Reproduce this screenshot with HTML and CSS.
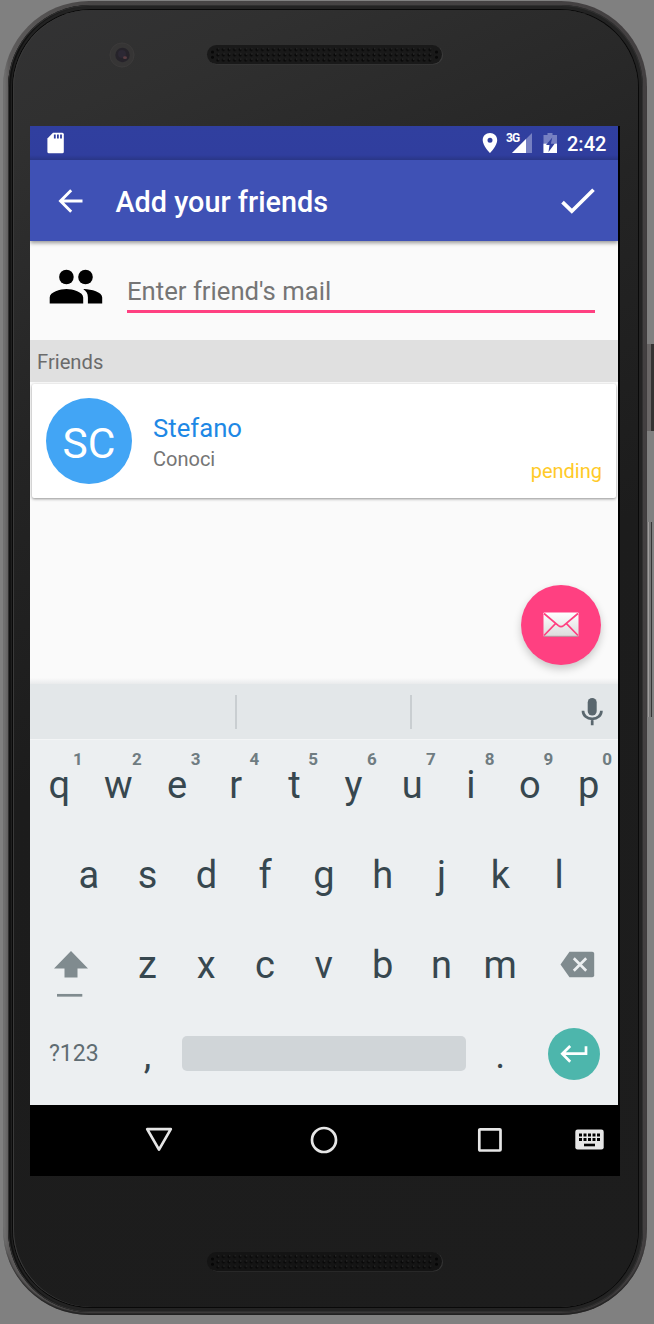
FILE: index.html
```html
<!DOCTYPE html>
<html lang="en">
<head>
<meta charset="utf-8">
<title>Add your friends</title>
<link rel="stylesheet" href="styles.css">
</head>
<body>
<div class="phone">
  <div class="bezel">
    <div class="glass">
      <div class="top">
        <svg class="camera" width="26" height="26" viewBox="0 0 26 26"><circle cx="13" cy="13" r="12.5" fill="#363535"/><circle cx="13" cy="13" r="12" fill="none" stroke="#3e3c3c" stroke-width=".7"/><circle cx="13.5" cy="13" r="7.2" fill="#26232a"/><circle cx="13" cy="12" r="4" fill="#2c2834"/><ellipse cx="16" cy="15.7" rx="2" ry="1.4" fill="#5c3e43"/></svg>
        <svg class="speaker" width="238" height="22" viewBox="0 0 238 22"><defs><pattern id="holes" width="5.58" height="5.3" patternUnits="userSpaceOnUse" x="9" y="3"><circle cx="2.8" cy="2.6" r="1.5" fill="#080808"/><circle cx="3.5" cy="1.8" r=".65" fill="#383838"/></pattern></defs><rect x="2" y="1.500" width="235" height="19" rx="9.5" fill="#3c3c3c"/><rect x="1" y="1" width="235" height="19" rx="9.5" fill="#191919"/><rect x="9" y="3" width="218.6" height="15.9" fill="url(#holes)"/><g fill="#080808"><circle cx="6.5" cy="8" r="1.5"/><circle cx="6.5" cy="13.3" r="1.5"/><circle cx="230.5" cy="8" r="1.5"/><circle cx="230.5" cy="13.3" r="1.5"/></g></svg>
      </div>
      <div class="screen">
        <div class="status">
          <svg class="sd" width="17" height="22" viewBox="0 0 17 22"><path d="M6 .7h9.3q1.5 0 1.5 1.5v17.6q0 1.5-1.5 1.5H1.9q-1.5 0-1.5-1.5V6.5z" fill="#fff"/><path d="M7.8 2.6v4M10.9 2.6v4M14 2.6v4" stroke="#303f9f" stroke-width="1.8"/></svg>
          <svg class="pin" width="16" height="22" viewBox="0 0 16 22"><path fill="#fff" fill-rule="evenodd" d="M8 1C3.8 1 .7 4.1.7 8.2.7 13.5 8 21 8 21s7.2-7.500 7.200-12.800C15.200 4.100 12 1 8 1zm0 4.700a2.500 2.500 0 1 1 0 5 2.500 2.500 0 0 1 0-5z"/></svg>
          <div class="signal"><svg width="26" height="22" viewBox="0 0 26 22"><path d="M5 21 25 1v20z" fill="#7680c2"/><path d="M5 21 19 7v14z" fill="#fff"/></svg><span class="net">3G</span></div>
          <svg class="battery" width="15" height="22" viewBox="0 0 15 22"><path d="M4.500 1h5v2H14v18H.500V3h4z" fill="#7680c2"/><path d="M.5 11.700H14V21H.5z" fill="#fff"/><path d="M9.300 5.500 3 13h3.500l-1 7 6.300-8.500H7.900z" fill="#303f9f"/></svg>
          <span class="clock">2:42</span>
        </div>
        <div class="appbar">
          <svg class="back" width="26" height="24" viewBox="0 0 26 24"><path d="M24.500 12H3M13.200 1.300 2.500 12l10.700 10.700" fill="none" stroke="#fff" stroke-width="2.900"/></svg>
          <span class="title">Add your friends</span>
          <svg class="check" width="36" height="28" viewBox="0 0 36 28"><path d="M2.500 15.200 11.800 24.200 33.500 2.800" fill="none" stroke="#fff" stroke-width="3.700"/></svg>
        </div>
        <div class="content">
          <div class="entry">
            <svg class="people" width="54" height="36" viewBox="0 0 54 36"><circle cx="17.400" cy="8" r="7.300"/><circle cx="36.500" cy="8" r="7.300"/><path d="M.7 34.500V28.500C.7 23 11.200 20 17.500 20s16.700 3 16.700 8.500v6zM35.200 20.100c7 .2 18 3 18 8.400v6H38.900v-6c0-4-1.600-6.500-4.600-8.300z"/></svg>
            <div class="field">Enter friend's mail</div>
          </div>
          <div class="section">Friends</div>
          <div class="card">
            <div class="avatar">SC</div>
            <div class="person"><div class="first">Stefano</div><div class="last">Conoci</div></div>
            <div class="pending">pending</div>
          </div>
          <div class="fab"><svg width="36" height="25" viewBox="0 0 36 25"><defs><linearGradient id="paper" x2="0" y2="1"><stop stop-color="#fff"/><stop offset="1" stop-color="#dcdcdc"/></linearGradient></defs><rect x=".5" y=".5" width="35" height="24" rx=".7" fill="url(#paper)"/><path d="M1 1.500 15.400 13.600q2.600 2 5.200 0L35 1.500M1 23.500 12.500 11.700M35 23.500 23.500 11.700" fill="none" stroke="#ff4081" stroke-width="1.700"/><path d="M1 24.300h34" stroke="#a78d93" stroke-width=".8"/></svg></div>
        </div>
        <div class="keyboard">
          <div class="suggest"><i></i><i></i>
            <svg width="22" height="30" viewBox="0 0 22 30"><rect x="6.700" y="1" width="9" height="17.500" rx="4.500" fill="#5a676e"/><path d="M2 13.800c0 4.800 3.800 8 9.200 8s9.200-3.200 9.200-8M11.200 22v6.300" fill="none" stroke="#5a676e" stroke-width="2.700"/></svg>
          </div>
          <div class="keys">
            <div class="row"><span>q<b>1</b></span><span>w<b>2</b></span><span>e<b>3</b></span><span>r<b>4</b></span><span>t<b>5</b></span><span>y<b>6</b></span><span>u<b>7</b></span><span>i<b>8</b></span><span>o<b>9</b></span><span>p<b>0</b></span></div>
            <div class="row home"><span>a</span><span>s</span><span>d</span><span>f</span><span>g</span><span>h</span><span>j</span><span>k</span><span>l</span></div>
            <div class="row third">
              <svg class="shift" width="36" height="48" viewBox="0 0 36 48"><path d="M18 1 35 18.500H24.500V27.500H11.500V18.500H1z" fill="#808b8f"/><path d="M4 45.300h25.300" stroke="#808b8f" stroke-width="2.700"/></svg>
              <span>z</span><span>x</span><span>c</span><span>v</span><span>b</span><span>n</span><span>m</span>
              <svg class="erase" width="35" height="27" viewBox="0 0 35 27"><path d="M9.500.8h22.700q2 0 2 2v21.400q0 2-2 2H9.500L.5 13.500z" fill="#808b8f"/><path d="m13.800 7.300 12.400 12.400m0-12.400L13.800 19.700" stroke="#eceff1" stroke-width="2.700"/></svg>
            </div>
            <div class="row fourth">
              <div class="sym">?123</div><span class="comma">,</span><div class="space"></div><span class="dot">.</span>
              <div class="enter"><svg width="28" height="18" viewBox="0 0 28 18"><path d="M26 1.200v7.500H2.500M10.200 1 2.300 8.800l7.900 7.900" fill="none" stroke="#fff" stroke-width="2.700"/></svg></div>
            </div>
          </div>
        </div>
        <div class="nav">
          <svg class="tri" width="28" height="25" viewBox="0 0 28 25"><path d="M2.200 2.200h23.600L14 22.700z" fill="none" stroke="#e6e6e6" stroke-width="2.700" stroke-linejoin="round"/></svg>
          <svg class="circ" width="28" height="28" viewBox="0 0 28 28"><circle cx="14" cy="14" r="12" fill="none" stroke="#e6e6e6" stroke-width="2.700"/></svg>
          <svg class="sq" width="26" height="26" viewBox="0 0 26 26"><rect x="2.300" y="2.300" width="21.200" height="21.200" rx=".8" fill="none" stroke="#e6e6e6" stroke-width="2.700"/></svg>
          <svg class="ime" width="29" height="21" viewBox="0 0 29 21"><rect x=".3" y=".5" width="28.400" height="20" rx="2.300" fill="#e6e6e6"/><path d="M4 6h21.500M4 10.500h21.500" stroke="#000" stroke-width="3" stroke-dasharray="3 1.500"/><path d="M9 16h11" stroke="#000" stroke-width="2.600"/></svg>
        </div>
      </div>
      <svg class="speaker low" width="238" height="22" viewBox="0 0 238 22"><rect x="2" y="1.500" width="235" height="19" rx="9.500" fill="#343434"/><rect x="1" y="1" width="235" height="19" rx="9.500" fill="#141414"/><rect x="9" y="3" width="218.600" height="15.900" fill="url(#holes)"/><g fill="#060606"><circle cx="6.500" cy="8" r="1.500"/><circle cx="6.500" cy="13.300" r="1.500"/><circle cx="230.500" cy="8" r="1.500"/><circle cx="230.500" cy="13.300" r="1.500"/></g></svg>
    </div>
  </div>
  <div class="power"></div>
  <div class="volume"></div>
</div>
</body>
</html>
```
FILE: styles.css
```css
* { box-sizing: border-box; }
svg { display: block; flex: none; }
body { margin: 0; padding: 1px 7px 0 3px; height: 1324px; background: #808080; font-family: Roboto, "Noto Sans", sans-serif; overflow: hidden; }
.phone { position: relative; width: 644px; height: 1314px; padding: 4px 4px 3px 5px; border-radius: 86px; background: linear-gradient(90deg, #777 0, #5d5b5b 6px, #484646 90px, #434041 100%); box-shadow: inset 0 -3px 2px -1px #202020; }
.bezel { width: 635px; height: 1307px; padding: 5px; border-radius: 82px; background: #232323; box-shadow: inset 0 0 0 1px #303030, inset 3px 0 1px #111; }
.glass { width: 625px; height: 1297px; border-radius: 78px; background: linear-gradient(155deg, #333334 0, #303030 8%, #242424 28%, #1c1c1c 50%, #1d1d1d 100%); box-shadow: 0 0 0 1px #090909, inset 1px 0 #3a3a3a; padding-left: 17px; }
.top { height: 116px; display: flex; align-items: flex-start; }
.camera { margin: 32px 0 0 79px; }
.speaker { margin: 34px 0 0 71px; }
.speaker.low { margin: 75px 0 0 176px; }
.screen { width: 590px; height: 1050px; background: #000; padding-right: 2px; }
.status { height: 34px; background: linear-gradient(#303f9f 0, #303e9e 29px, #293687 34px); display: flex; align-items: flex-start; color: #fff; padding-top: 7px; }
.sd { margin-left: 17px; margin-top: -1px; }
.pin { margin-left: 418px; margin-top: -1px; }
.signal { position: relative; margin-left: 9px; margin-top: -1px; width: 26px; }
.net { position: absolute; left: -1px; top: 0; font-size: 12px; line-height: 12px; font-weight: 700; letter-spacing: -1px; }
.battery { margin-left: 10px; margin-top: -1px; }
.clock { margin-left: 9px; font-size: 20px; line-height: 23px; font-weight: 500; }
.appbar { position: relative; z-index: 1; height: 81px; background: #3f51b5; box-shadow: 0 2px 4px rgba(0,0,0,.4); clip-path: inset(0 0 -8px 0); color: #fff; display: flex; align-items: center; }
.back { margin-left: 27.500px; }
.title { width: 440px; margin-left: 32px; font-size: 28.800px; line-height: 34px; font-weight: 500; white-space: nowrap; padding-top: 2px; }
.check { margin-left: 4.500px; }
.content { height: 443px; background: linear-gradient(#fafafa 437px, #e9ebec 443px); }
.entry { height: 99px; display: flex; }
.people { margin: 28px 24px 0 19px; }
.field { width: 468px; height: 72px; padding-top: 34px; border-bottom: 3px solid #ff4081; color: #757575; font-size: 25.700px; line-height: 32px; }
.section { height: 42px; background: #e0e0e0; color: #6b6b6b; font-size: 20.200px; line-height: 44px; padding-left: 7px; }
.card { margin: 2px; height: 114px; background: #fff; border-radius: 2px; box-shadow: 0 1px 3px rgba(0,0,0,.42); display: flex; }
.avatar { width: 86px; height: 86px; margin: 14px 0 0 14px; border-radius: 50%; background: #42a5f5; color: #fff; text-align: center; font-size: 42.500px; line-height: 91px; }
.person { width: 360px; margin: 28px 0 0 21px; }
.first { color: #1e88e5; font-size: 25.700px; line-height: 32px; }
.last { color: #757575; font-size: 20px; line-height: 24px; margin-top: 3px; }
.pending { flex: 1; padding: 75px 14px 0 0; text-align: right; color: #ffca28; font-size: 20px; line-height: 24px; }
.fab { width: 80px; height: 80px; margin: 86.500px 17.500px 0 auto; border-radius: 50%; background: #ff4081; box-shadow: 0 4px 9px rgba(0,0,0,.2); display: flex; align-items: center; justify-content: center; }
.keyboard { height: 421px; background: #eceff1; }
.suggest { height: 56px; background: #e3e7e9; border-bottom: 1px solid #f3f5f6; display: flex; align-items: flex-start; }
.suggest i { width: 2px; height: 34px; margin: 11px 0 0 205px; background: #c9ced1; }
.suggest i + i { margin-left: 173px; }
.suggest svg { margin: 12.500px 0 0 168.500px; }
.keys { margin-top: -1px; }
.row { height: 90px; display: flex; align-items: center; color: #37474f; font-size: 38px; line-height: 92px; }
.row span { position: relative; width: 58.800px; text-align: center; flex: none; padding-top: 1px; }
.row b { position: absolute; left: 38px; top: 11px; width: 20px; font-size: 17px; font-weight: 700; line-height: 20px; color: #6f7c81; }
.home { padding-left: 29.400px; }
.shift { margin: 19px 29px 0 23px; }
.erase { margin-left: 30px; }
.sym { width: 88px; padding-left: 19px; font-size: 23px; color: #5f6c72; line-height: 94px; }
.space { width: 284px; height: 35px; border-radius: 5px; background: #d0d5d8; margin: 0 5px 2px; }
.fourth .enter { width: 52px; height: 52px; margin-left: 18px; border-radius: 50%; background: #4db6ac; display: flex; align-items: center; justify-content: center; }
.nav { height: 71px; display: flex; align-items: center; }
.tri { margin: -2px 0 0 114.500px; }
.circ { margin: -2px 0 0 137.500px; }
.sq { margin: -2px 0 0 138.500px; }
.ime { margin: -2px 0 0 72.500px; }
.power, .volume { position: absolute; left: 644px; width: 7px; }
.power { top: 343px; height: 87px; background: linear-gradient(90deg, #696666 0 4px, #353333 4px); }
.volume { top: 521px; height: 195px; background: linear-gradient(90deg, #777 0 1px, #a09d9d 1px 2px, #777 2px 4px, #373535 4px 5px, #808080 5px); }
```
